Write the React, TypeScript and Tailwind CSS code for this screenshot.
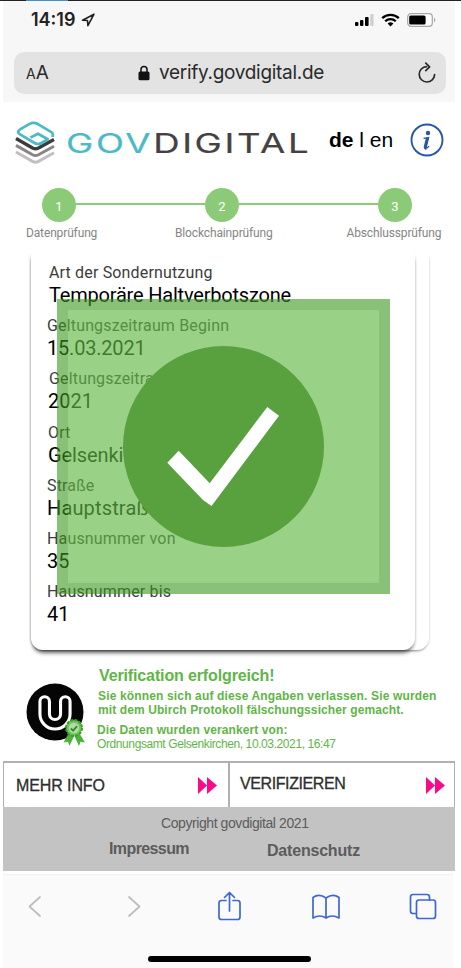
import React from "react";

const roboto = "font-[Roboto,'Liberation_Sans',sans-serif]";
const arial = "font-['Liberation_Sans',Arial,sans-serif]";
const inter = "font-[Inter,'Liberation_Sans',sans-serif]";

function StatusBar() {
  return (
    <div className={`flex h-[34px] items-center pl-7 pr-[19px] text-black ${inter}`}>
      <span className="w-[50px] whitespace-nowrap text-[18px] leading-[20px] font-semibold text-[#222]">14:19</span>
      <svg className="h-[14px] w-[14px]" viewBox="0 0 14 14">
        <path d="M13 1.2 1.5 7.2l5 .3.4 5.2z" fill="none" stroke="#222" strokeWidth="1.6" strokeLinejoin="round" />
      </svg>
      <div className="ml-auto flex items-center gap-[7px]">
        <svg className="h-[14px] w-[20px]" viewBox="0 0 20 14">
          <rect x="1" y="9" width="3.4" height="4" rx="1" fill="#000" />
          <rect x="6" y="7" width="3.4" height="6" rx="1" fill="#000" />
          <rect x="11" y="4" width="3.6" height="9" rx="1" fill="#000" />
          <rect x="16.2" y="1" width="3.4" height="12" rx="1" fill="#d0d0d0" />
        </svg>
        <svg className="h-[14px] w-[19px]" viewBox="0 0 19 14">
          <path d="M1.2 5.2a12 12 0 0 1 16.6 0M4.2 8.3a7.6 7.6 0 0 1 10.6 0" fill="none" stroke="#000" strokeWidth="2.3" />
          <path d="M6.6 10.6a4.2 4.2 0 0 1 5.8 0L9.5 13.5z" fill="#000" />
        </svg>
        <svg className="h-[14px] w-[29px]" viewBox="0 0 29 14">
          <rect x=".7" y=".7" width="24.6" height="12.6" rx="3.4" fill="#fff" stroke="#a9a9a9" strokeWidth="1.3" />
          <rect x="2.2" y="2.4" width="16.4" height="9.2" rx="1.6" fill="#000" />
          <path d="M27 4.8v4.4c1.8-.6 1.8-3.8 0-4.4z" fill="#a9a9a9" />
        </svg>
      </div>
    </div>
  );
}

function AddressBar() {
  return (
    <div className={`mt-[15px] ml-[11px] flex h-[42px] w-[432px] items-center rounded-[10px] bg-[#e3e3e4] text-[#2a2a2a] ${inter}`}>
      <span className="ml-3 w-[112px] whitespace-nowrap leading-[24px]">
        <span className="text-[14px]">A</span>
        <span className="text-[19px]">A</span>
      </span>
      <svg className="h-[16px] w-[12px]" viewBox="0 0 12 16">
        <path d="M3 8V4.5a3 3 0 0 1 6 0V8" fill="none" stroke="#111" strokeWidth="1.5" />
        <rect x=".5" y="6.6" width="11" height="8.6" rx="1.5" fill="#111" />
      </svg>
      <span className="ml-[9px] whitespace-nowrap text-[19px] leading-[24px] tracking-[-0.3px]">verify.govdigital.de</span>
      <svg className="mr-[9px] ml-auto h-[22px] w-[20px]" viewBox="0 0 20 22">
        <path d="M9.6 4.6A7.7 7.7 0 1 0 17.6 12.6" fill="none" stroke="#2a2a2a" strokeWidth="1.7" strokeLinecap="round" />
        <path d="M8.8 1.2 12.6 4.8 8.8 8.6" fill="none" stroke="#2a2a2a" strokeWidth="1.7" strokeLinecap="round" strokeLinejoin="round" />
      </svg>
    </div>
  );
}

function Brand() {
  return (
    <div className="flex h-[86px] items-start pl-[11px]">
      <svg className="mt-[18px] h-[46px] w-[42px]" viewBox="0 0 42 46">
        <g fill="none" strokeLinejoin="round">
          <path d="M2 32l17 9.6q2.500 1.200 5 0l16-8.800" stroke="#c2bfc0" strokeWidth="3" />
          <path d="M2 25.400l17 9.600q2.500 1.200 5 0l16-8.800" stroke="#8a8687" strokeWidth="3" />
          <path d="M2 18.600l17 9.600q2.500 1.200 5 0l16-8.800" stroke="#3f3b3d" strokeWidth="3.400" />
          <path d="M38.800 17v-2.500q0-1.500-1.500-2.400L23.500 3.800Q19.500 1.700 15.500 3.900L5.700 9.700Q2.700 12 5.700 14.200L20.500 23Q24 25 27.500 23L33.800 19.200L24 13.700L16.500 17.500" stroke="#4bb9c8" strokeWidth="2.700" />
        </g>
      </svg>
      <div className="mt-[23px] ml-[10px] h-[32px] w-[263px]">
        <span className={`inline-block origin-left scale-x-[1.38] whitespace-nowrap text-[26.500px] leading-[36px] tracking-[1.900px] text-[#454143] ${inter} [-webkit-text-stroke:0.2px]`}>
          <span className="text-[#4bb9c8]">GOV</span>DIGITAL
        </span>
      </div>
      <div className={`mt-[25px] w-[81px] whitespace-nowrap text-[21px] leading-[25px] text-black ${arial}`}>
        <b>de</b> l en
      </div>
      <svg className="mt-[21px] h-[34px] w-[34px]" viewBox="0 0 34 34">
        <circle cx="17" cy="17" r="15.500" fill="#fff" stroke="#2957a8" strokeWidth="1.900" />
        <circle cx="18" cy="10" r="2.200" fill="#2957a8" />
        <path d="M13.600 15.300l5-.8-2.300 9.300q-.2 1.500 1.100.8l1.600-1.500" fill="none" stroke="#2957a8" strokeWidth="1.300" />
        <path d="M17.300 15l-2.200 8.700q-.2 1.900 1.300 1.500" fill="none" stroke="#2957a8" strokeWidth="2.700" />
      </svg>
    </div>
  );
}

function Dot({ n }: { n: number }) {
  return (
    <div className={`flex h-[34px] w-[34px] shrink-0 items-center justify-center rounded-full bg-[#8bcb78] pt-[2px] text-[13px] leading-none text-white ${roboto}`}>
      {n}
    </div>
  );
}

function Stepper() {
  return (
    <div className="h-[65px]">
      <div className="flex items-center pl-[39px]">
        <Dot n={1} />
        <div className="mb-[2px] h-[2px] w-[129px] bg-[#8bcb78]" />
        <Dot n={2} />
        <div className="mb-[2px] h-[2px] w-[139px] bg-[#8bcb78]" />
        <Dot n={3} />
      </div>
      <div className={`mt-[3px] flex pl-[23px] text-[12px] leading-[16px] tracking-[-0.14px] whitespace-nowrap text-[#858585] ${roboto}`}>
        <span className="w-[149px]">Datenprüfung</span>
        <span className="w-[171.500px]">Blockchainprüfung</span>
        <span>Abschlussprüfung</span>
      </div>
    </div>
  );
}

const fields: { label: string; value: string; l: string; v: string }[] = [
  { label: "Art der Sondernutzung", value: "Temporäre Haltverbotszone", l: "ml-[2px]", v: "ml-[2px] tracking-[-0.2px]" },
  { label: "Geltungszeitraum Beginn", value: "15.03.2021", l: "", v: "tracking-[-0.2px]" },
  { label: "Geltungszeitraum Ende", value: "2021", l: "ml-[2px]", v: "ml-[1px]" },
  { label: "Ort", value: "Gelsenkirchen", l: "ml-px", v: "ml-px tracking-[-0.1px]" },
  { label: "Straße", value: "Hauptstraße", l: "", v: "tracking-[0.15px]" },
  { label: "Hausnummer von", value: "35", l: "", v: "" },
  { label: "Hausnummer bis", value: "41", l: "", v: "" },
];

function Card() {
  return (
    <div className="relative h-[408px] overflow-hidden px-7">
      <div className="h-[397px] w-[398px] rounded-b-[12px] bg-white shadow-[0_0_3px_rgba(0,0,0,0.2),0_3px_3px_-2px_rgba(0,0,0,0.4)]">
        <div className={`h-[397px] w-[384px] rounded-b-[12px] bg-white pt-[9px] pl-[16px] shadow-[0_0_3px_rgba(0,0,0,0.2),0_5px_4px_-2px_rgba(0,0,0,0.55)] ${roboto}`}>
          {fields.map((f) => (
            <div key={f.label} className="mb-[9.2px] whitespace-nowrap">
              <div className={`text-[16px] leading-[22px] tracking-[0.16px] text-[#3c3c3c] ${f.l}`}>{f.label}</div>
              <div className={`text-[20px] leading-[22px] text-black ${f.v}`}>{f.value}</div>
            </div>
          ))}
        </div>
      </div>
      <div className="absolute top-0 left-0 h-[8px] w-full bg-linear-to-b from-white to-transparent" />
      <div className="absolute top-[46px] left-[54px] h-[295px] w-[333px] border-[11px] border-[rgba(60,152,30,0.6)] bg-[rgba(98,185,69,0.65)] bg-clip-padding">
        <svg className="absolute top-[36px] left-[55px] h-[201px] w-[201px]" viewBox="123 346 201 201">
          <circle cx="223.500" cy="446.500" r="100.500" fill="#59a13f" />
          <path d="M178.700 450.700L209.700 483.300L267.300 407L279 415.700L211.500 506L203 500L167.300 462.700z" fill="#fff" />
        </svg>
      </div>
    </div>
  );
}

function Seal() {
  return (
    <svg className="h-[68px] w-[62px]" viewBox="0 0 62 68">
      <circle cx="31" cy="32" r="28.500" fill="#050505" />
      <path d="M20.700 21.500v12.400a10.300 10.300 0 0 0 20.600 0V21.500" fill="none" stroke="#fff" strokeWidth="12.600" strokeLinecap="round" />
      <path d="M20.700 21.500v12.400a10.300 10.300 0 0 0 20.600 0V21.500" fill="none" stroke="#050505" strokeWidth="6.400" strokeLinecap="round" />
      <path d="M46 51l-6.500 11.500 4.500-.8 1.500 4.300 6-13zM54 51l7 11.500-4.500-.8-1.500 4.300-6-13z" fill="#4fb13a" />
      <circle cx="50" cy="48" r="8" fill="#6cc950" stroke="#3f9a31" strokeWidth="2" strokeDasharray="3 1.200" />
      <circle cx="50" cy="48" r="5.200" fill="#b5d9ab" />
      <path d="M46.800 48.500l2.300 2.200 4-4.600" fill="none" stroke="#2f8f25" strokeWidth="1.800" />
    </svg>
  );
}

function Verification() {
  return (
    <div className={`flex h-[98px] pl-[21px] whitespace-nowrap text-[#5fb548] ${arial}`}>
      <div className="mt-[17px] w-[73px]">
        <Seal />
      </div>
      <div>
        <div className="mt-[3px] ml-[2px] text-[16px] leading-[20px] font-bold tracking-[-0.13px]">Verification erfolgreich!</div>
        <div className="mt-[3px] ml-px text-[12px] leading-[14px] font-bold">
          <div className="tracking-[0.15px]">Sie können sich auf diese Angaben verlassen. Sie wurden</div>
          <div className="tracking-[0.1px]">mit dem Ubirch Protokoll fälschungssicher gemacht.</div>
        </div>
        <div className="mt-[6px] text-[12px] leading-[14px] font-bold tracking-[0.1px]">Die Daten wurden verankert von:</div>
        <div className="text-[12px] leading-[14px] tracking-[-0.4px]">Ordnungsamt Gelsenkirchen, 10.03.2021, 16:47</div>
      </div>
    </div>
  );
}

function Forward() {
  return (
    <svg className="h-[17px] w-[19px]" viewBox="0 0 19 17">
      <path d="M0 0l9 8.500L0 17zM9 0l10 8.500L9 17z" fill="#fb0a87" />
    </svg>
  );
}

function Actions() {
  return (
    <div className={`flex h-[46px] w-[452px] border-x border-t-2 border-[#b0b0b0] bg-white text-[16px] leading-[20px] whitespace-nowrap text-[#2e2e2e] [-webkit-text-stroke:0.3px] ${arial}`}>
      <div className="flex w-[226px] border-r-2 border-[#b0b0b0] pl-[12px]">
        <span className="mt-[13px] w-[182px] tracking-[-0.1px]">MEHR INFO</span>
        <span className="mt-[14px]"><Forward /></span>
      </div>
      <div className="flex pl-[10px]">
        <span className="mt-[11px] w-[186px] tracking-[-0.4px]">VERIFIZIEREN</span>
        <span className="mt-[14px]"><Forward /></span>
      </div>
    </div>
  );
}

function Footer() {
  return (
    <div className={`h-[64px] w-[452px] bg-[#c3c3c3] whitespace-nowrap text-[#5c5c5c] ${arial}`}>
      <div className="pt-[7px] pl-[158px] text-[14px] leading-[18px] tracking-[-0.42px]">Copyright govdigital 2021</div>
      <div className="flex pl-[106px] text-[16px] leading-[18px] font-bold">
        <span className="mt-[8px] w-[158px] tracking-[-0.6px]">Impressum</span>
        <span className="mt-[10px] tracking-[-0.2px]">Datenschutz</span>
      </div>
    </div>
  );
}

function Toolbar() {
  return (
    <div className="mt-[3px] h-[94px] w-[450px] border-t border-[#f0f0f0] bg-[#fafafb]">
      <svg className="h-[60px] w-[450px]" viewBox="3 875 450 60" fill="none" strokeLinecap="round" strokeLinejoin="round">
        <path d="M40 897L29.500 906.500L40 916M129 897L139.500 906.500L129 916" stroke="#bdbdc1" strokeWidth="1.700" />
        <g stroke="#3f66d2" strokeWidth="1.700">
          <path d="M226 900.500H221.500Q219 900.500 219 903V917Q219 919.500 221.500 919.500H237.500Q240 919.500 240 917V903Q240 900.500 237.500 900.500H233M229.500 911V893M224.500 897.500L229.500 892.500L234.500 897.500" />
          <path d="M326 898V918Q320 914 313 918V897.500Q319 893 326 898Q333 893 339 897.500V918Q332 914 326 918" />
          <path d="M416 913.500H413Q410.500 913.500 410.500 911V897Q410.500 894.500 413 894.500H427Q429.500 894.500 429.500 897V900" />
          <rect x="416.500" y="900" width="19" height="18.500" rx="2.500" />
        </g>
      </svg>
      <div className="mt-[21px] ml-[145px] h-[6px] w-[163px] rounded-full bg-black" />
    </div>
  );
}

export default function App() {
  return (
    <div className="h-[968px] w-[461px] overflow-hidden bg-white">
      <div className="flex h-px w-full bg-[#25212a]">
        <div className="ml-[26px] w-[42px] bg-[#3f8fd5]" />
      </div>
      <div className="pl-[3px]">
        <div className="h-[101px] w-[452px] bg-[#f7f7f8] pt-[2px]">
          <StatusBar />
          <AddressBar />
        </div>
        <Brand />
        <Stepper />
        <Card />
        <div className="h-[2px]" />
        <Verification />
        <Actions />
        <Footer />
        <Toolbar />
      </div>
    </div>
  );
}
